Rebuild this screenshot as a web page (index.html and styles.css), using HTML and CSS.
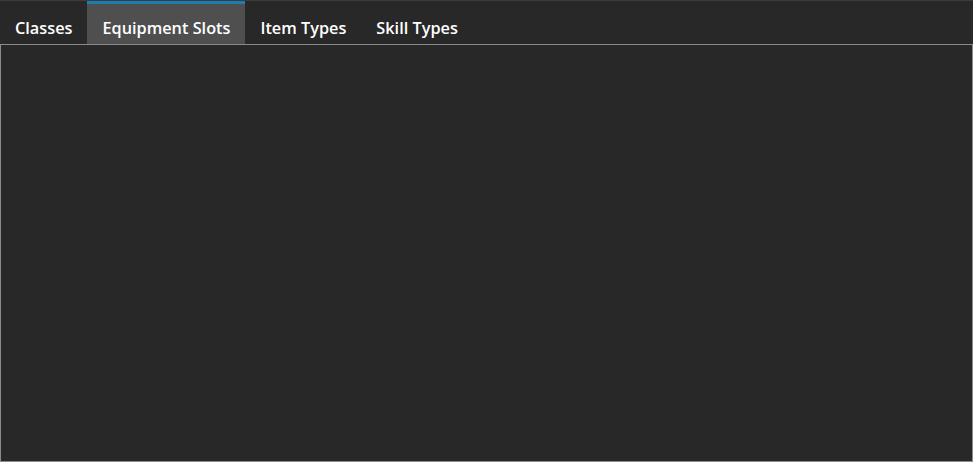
FILE: index.html
```html
<!DOCTYPE html>
<html>
<head>
<meta charset="utf-8">
<link rel="stylesheet" href="styles.css">
</head>
<body>
<div class="window">
  <div class="tabs">
    <div class="tab">Classes</div>
    <div class="tab active">Equipment Slots</div>
    <div class="tab">Item Types</div>
    <div class="tab">Skill Types</div>
  </div>
  <div class="panel"></div>
</div>
</body>
</html>
```
FILE: styles.css
```css
html, body {
  margin: 0;
  padding: 0;
  background: #282828;
}
.window {
  width: 973px;
  height: 462px;
  display: flex;
  flex-direction: column;
  border-top: 1px solid #3c3c3c;
  box-sizing: border-box;
}
.tabs {
  display: flex;
  height: 43px;
  flex: none;
}
.tab {
  padding: 11px 15px 0 15px;
  display: flex;
  align-items: center;
  color: #ffffff;
  font-family: "Open Sans", sans-serif;
  font-weight: 600;
  font-size: 16.3px;
  box-sizing: border-box;
}
.tab.active {
  background: #4f4f4f;
  border-top: 3px solid #1c7db0;
  padding-top: 8px;
}
.panel {
  flex: 1;
  border: 1px solid #8a8a8a;
  background: #282828;
}
```
